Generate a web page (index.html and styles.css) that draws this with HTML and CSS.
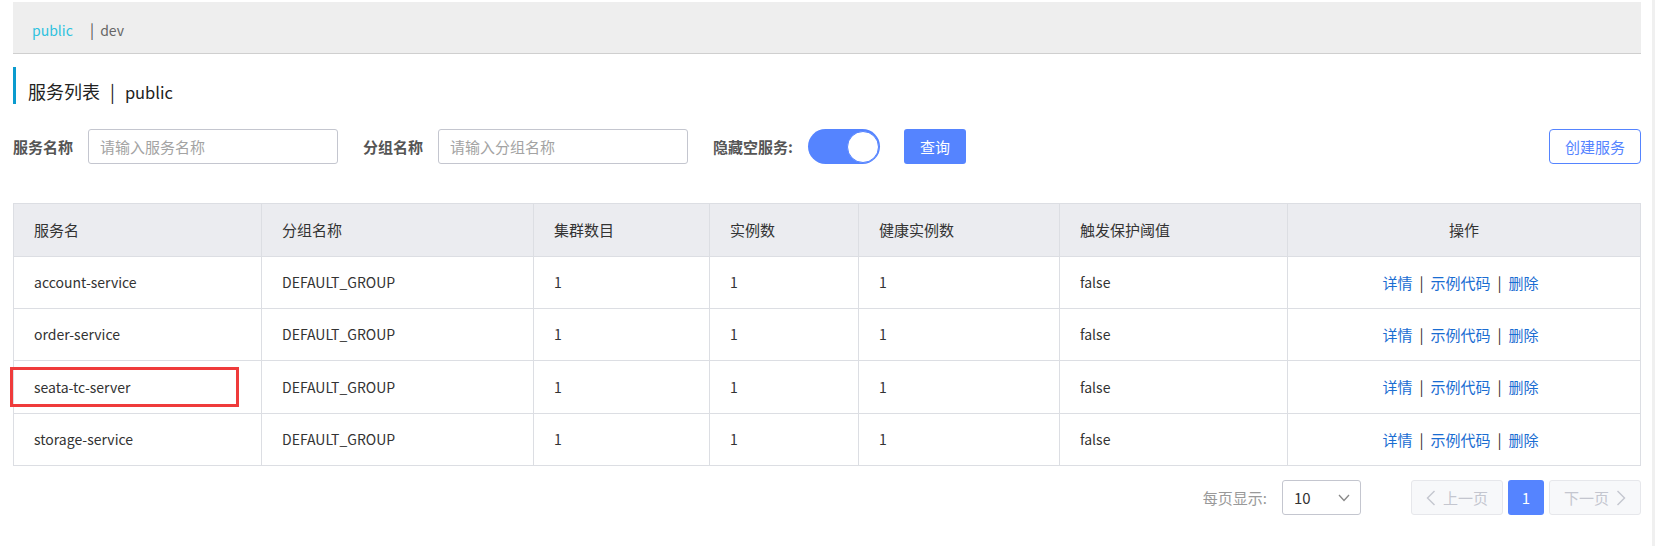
FILE: index.html
```html
<!DOCTYPE html>
<html lang="zh-CN">
<head>
<meta charset="utf-8">
<title>服务列表</title>
<link rel="stylesheet" href="styles.css">
</head>
<body>
<div class="page">
  <div class="ns-bar">
    <span class="ns ns-active">public</span>
    <span class="ns-sep">|</span>
    <span class="ns">dev</span>
  </div>

  <div class="page-title">
    <span>服务列表</span><span class="title-sep">|</span><span class="title-en">public</span>
  </div>

  <div class="filters">
    <label class="f-label">服务名称</label>
    <input class="f-input" type="text" placeholder="请输入服务名称">
    <label class="f-label">分组名称</label>
    <input class="f-input" type="text" placeholder="请输入分组名称">
    <label class="f-label">隐藏空服务:</label>
    <div class="switch"><div class="knob"></div></div>
    <button class="btn-primary">查询</button>
    <button class="btn-outline">创建服务</button>
  </div>

  <div class="table-wrap">
    <table class="svc-table">
      <thead>
        <tr>
          <th class="c1">服务名</th>
          <th class="c2">分组名称</th>
          <th class="c3">集群数目</th>
          <th class="c4">实例数</th>
          <th class="c5">健康实例数</th>
          <th class="c6">触发保护阈值</th>
          <th class="c7 center">操作</th>
        </tr>
      </thead>
      <tbody>
        <tr>
          <td>account-service</td><td>DEFAULT_GROUP</td><td>1</td><td>1</td><td>1</td><td>false</td>
          <td class="ops"><a class="lnk">详情</a><span class="lsep">|</span><a class="lnk">示例代码</a><span class="lsep">|</span><a class="lnk">删除</a></td>
        </tr>
        <tr>
          <td>order-service</td><td>DEFAULT_GROUP</td><td>1</td><td>1</td><td>1</td><td>false</td>
          <td class="ops"><a class="lnk">详情</a><span class="lsep">|</span><a class="lnk">示例代码</a><span class="lsep">|</span><a class="lnk">删除</a></td>
        </tr>
        <tr class="tall">
          <td>seata-tc-server</td><td>DEFAULT_GROUP</td><td>1</td><td>1</td><td>1</td><td>false</td>
          <td class="ops"><a class="lnk">详情</a><span class="lsep">|</span><a class="lnk">示例代码</a><span class="lsep">|</span><a class="lnk">删除</a></td>
        </tr>
        <tr>
          <td>storage-service</td><td>DEFAULT_GROUP</td><td>1</td><td>1</td><td>1</td><td>false</td>
          <td class="ops"><a class="lnk">详情</a><span class="lsep">|</span><a class="lnk">示例代码</a><span class="lsep">|</span><a class="lnk">删除</a></td>
        </tr>
      </tbody>
    </table>
    <div class="highlight"></div>
  </div>

  <div class="pager">
    <span class="pg-label">每页显示:</span>
    <div class="pg-select">
      <span>10</span>
      <svg width="12" height="8" viewBox="0 0 12 8"><polyline points="1,1 6,6.5 11,1" fill="none" stroke="#888" stroke-width="1.3"/></svg>
    </div>
    <div class="pg-btns">
      <button class="pg-btn pg-prev">
        <svg width="10" height="16" viewBox="0 0 10 16"><polyline points="8.5,1 1.5,8 8.5,15" fill="none" stroke="#c4c6cf" stroke-width="1.4"/></svg>
        <span>上一页</span>
      </button>
      <button class="pg-num">1</button>
      <button class="pg-btn pg-next">
        <span>下一页</span>
        <svg width="10" height="16" viewBox="0 0 10 16"><polyline points="1.5,1 8.5,8 1.5,15" fill="none" stroke="#c4c6cf" stroke-width="1.4"/></svg>
      </button>
    </div>
  </div>
</div>
<div class="scroll-strip"></div>
</body>
</html>
```

FILE: styles.css
```css
* { box-sizing: border-box; }

html, body {
  margin: 0;
  padding: 0;
  background: #fff;
}

body {
  display: flex;
  height: 546px;
  overflow: hidden;
  font-family: "Noto Sans CJK SC", sans-serif;
  font-size: 15px;
  color: #333;
}

.page {
  flex: none;
  width: 1628px;
  margin-left: 13px;
}

.scroll-strip {
  flex: none;
  width: 3px;
  height: 546px;
  margin-left: auto;
  background: #f0f0f0;
}

/* namespace bar */
.ns-bar {
  margin-top: 2px;
  height: 52px;
  padding: 5px 0 0 19px;
  line-height: 46px;
  background: #eeeeee;
  border-bottom: 1px solid #cfcfcf;
  font-size: 14px;
  color: #666;
}

.ns-active { color: #2fc2de; }

.ns-sep {
  margin: 0 3px 0 14px;
  font-size: 15px;
  color: #555;
}

/* title */
.page-title {
  margin-top: 13px;
  height: 37px;
  border-left: 3px solid #0b9bce;
  padding: 11px 0 0 12px;
  line-height: 26px;
  font-size: 18px;
  color: #222;
}

.title-sep {
  margin: 0 10px;
}

.title-en {
  font-size: 16.5px;
}

/* filter row */
.filters {
  margin-top: 25px;
  display: flex;
  align-items: center;
  height: 35px;
}

.f-label {
  font-weight: bold;
  color: #555;
  margin-right: 15px;
  white-space: nowrap;
}

.f-input {
  width: 250px;
  height: 35px;
  border: 1px solid #c4c6cf;
  border-radius: 3px;
  padding: 0 11px;
  font-family: inherit;
  font-size: 15px;
  color: #333;
  margin-right: 25px;
  outline: none;
}

.f-input::placeholder { color: #a3a3a3; }

.switch {
  width: 72px;
  height: 35px;
  border-radius: 18px;
  background: #5584ff;
  display: flex;
  align-items: center;
  justify-content: flex-end;
  padding-right: 1px;
  margin-right: 24px;
}

.knob {
  width: 32px;
  height: 32px;
  border-radius: 50%;
  background: #fff;
  border: 1px solid #5584ff;
}

.btn-primary {
  width: 62px;
  height: 35px;
  border: none;
  border-radius: 3px;
  background: #5584ff;
  color: #fff;
  font-family: inherit;
  font-size: 15px;
  padding: 0;
}

.btn-outline {
  margin-left: auto;
  width: 92px;
  height: 35px;
  border: 1px solid #5584ff;
  border-radius: 4px;
  background: #fff;
  color: #5584ff;
  font-family: inherit;
  font-size: 15px;
  padding: 0;
}

/* table */
.table-wrap {
  position: relative;
  margin-top: 39px;
}

.svc-table {
  width: 1628px;
  table-layout: fixed;
  border-collapse: separate;
  border-spacing: 0;
  border-top: 1px solid #dcdee3;
  border-left: 1px solid #dcdee3;
}

.svc-table th,
.svc-table td {
  border-right: 1px solid #dcdee3;
  border-bottom: 1px solid #dcdee3;
  padding: 0 0 0 20px;
  text-align: left;
  font-weight: normal;
  white-space: nowrap;
  color: #333;
}

.svc-table th {
  background: #ebecf0;
  height: 53px;
  line-height: 52px;
  font-size: 15px;
}

.svc-table td {
  height: 52px;
  line-height: 51px;
  font-size: 14px;
}

.svc-table tr.tall td {
  height: 53px;
  line-height: 52px;
}

.svc-table .center {
  text-align: center;
  padding-left: 0;
}

.svc-table td.ops {
  text-align: center;
  padding: 0 7px 0 0;
  font-size: 15px;
}

.c1 { width: 248px; }
.c2 { width: 272px; }
.c3 { width: 176px; }
.c4 { width: 149px; }
.c5 { width: 201px; }
.c6 { width: 228px; }
.c7 { width: 353px; }

.lnk {
  color: #1a6dd2;
  cursor: pointer;
}

.lsep {
  margin: 0 7px;
  color: #333;
}

.highlight {
  position: absolute;
  left: -3px;
  top: 164px;
  width: 229px;
  height: 40px;
  border: 3px solid #ef3b3b;
}

/* pager */
.pager {
  margin-top: 14px;
  display: flex;
  align-items: center;
  justify-content: flex-end;
  height: 35px;
}

.pg-label {
  color: #999;
  margin-right: 15px;
}

.pg-select {
  width: 79px;
  height: 35px;
  border: 1px solid #c4c6cf;
  border-radius: 3px;
  display: flex;
  align-items: center;
  justify-content: space-between;
  padding: 0 10px 0 11px;
  color: #333;
  margin-right: 50px;
}

.pg-btns {
  display: flex;
  gap: 5px;
}

.pg-btn {
  width: 92px;
  height: 35px;
  border: 1px solid #e6e7eb;
  border-radius: 3px;
  background: #f7f8fa;
  color: #c4c6cf;
  font-family: inherit;
  font-size: 15px;
  display: flex;
  align-items: center;
  justify-content: center;
  gap: 7px;
  padding: 0;
}

.pg-num {
  width: 36px;
  height: 35px;
  border: none;
  border-radius: 3px;
  background: #5584ff;
  color: #fff;
  font-family: inherit;
  font-size: 15px;
  padding: 0;
}
```
